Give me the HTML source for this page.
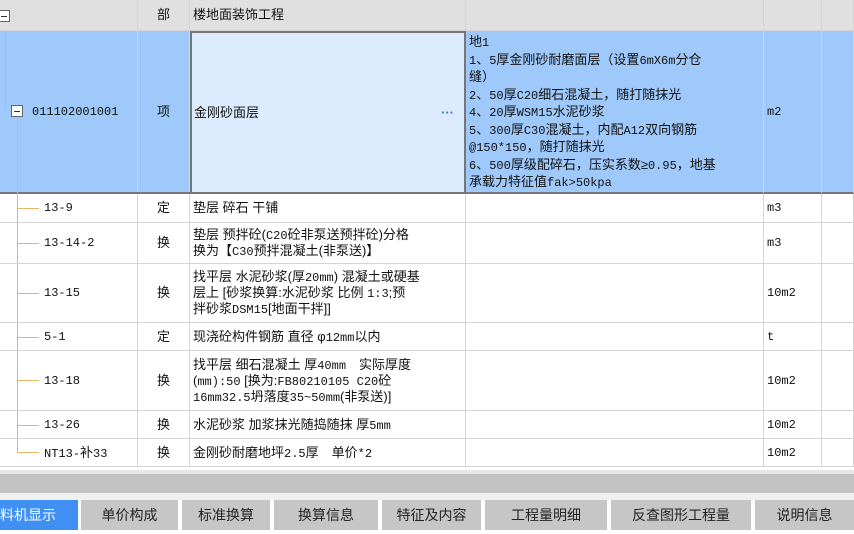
<!DOCTYPE html>
<html><head><meta charset="utf-8"><style>
*{margin:0;padding:0;box-sizing:border-box}
body{width:854px;height:534px;overflow:hidden;background:#fff;font-family:"Liberation Sans","Noto Sans CJK SC",sans-serif;font-size:13px;color:#111;position:relative}
.c{position:absolute;border-right:1px solid #d4d4d4;border-bottom:1px solid #d4d4d4;overflow:hidden;white-space:nowrap;display:flex;align-items:center;padding-left:3px;line-height:16px}
.m{display:block;padding-top:0}
.t{position:absolute;font-size:14px;color:#222;display:flex;align-items:center;justify-content:center;background:#c6c6c6;top:500px;height:30px}
.bx{position:absolute;width:12px;height:12px;border:1px solid #666;background:#fff}
.bx:after{content:"";position:absolute;left:2px;top:5px;width:6px;height:1px;background:#333}
.vl{position:absolute;background:#e2b868;width:1px}
.hl{position:absolute;background:#e2b868;height:1px}
.n{font-family:"Liberation Mono",monospace;font-size:12px;line-height:10px}
</style></head><body>
<div class="c" style="left:0;top:0;width:138px;height:31px;background:#e0e0e0"></div>
<div class="c" style="left:138px;top:0;width:52px;height:31px;background:#e0e0e0;justify-content:center;padding:0">部</div>
<div class="c" style="left:190px;top:0;width:276px;height:31px;background:#e0e0e0">楼地面装饰工程</div>
<div class="c" style="left:466px;top:0;width:298px;height:31px;background:#e0e0e0"></div>
<div class="c" style="left:764px;top:0;width:58px;height:31px;background:#e0e0e0"></div>
<div class="c" style="left:822px;top:0;width:32px;height:31px;background:#e0e0e0"></div>
<div class="bx" style="left:-2px;top:10px"></div>

<div class="c" style="left:0;top:31px;width:138px;height:163px;background:#9ec9fa;padding-left:32px"><span class="n">011102001001</span></div>
<div class="c" style="left:138px;top:31px;width:52px;height:163px;background:#9ec9fa;justify-content:center;padding:0">项</div>
<div class="c" style="left:190px;top:31px;width:276px;height:163px;background:#dcebfd;border:2px solid #777;padding-left:2px">金刚砂面层<span style="position:absolute;right:10px;color:#3a76c0;font-weight:bold">···</span></div>
<div class="c m" style="left:466px;top:31px;width:298px;height:163px;background:#9ec9fa;padding-top:2px;font-size:13px;line-height:17.5px;border-bottom:2px solid #777">地<span class="n">1</span><br><span class="n">1</span>、<span class="n">5</span>厚金刚砂耐磨面层（设置<span class="n">6mX6m</span>分仓<br>缝）<br><span class="n">2</span>、<span class="n">50</span>厚<span class="n">C20</span>细石混凝土，随打随抹光<br><span class="n">4</span>、<span class="n">20</span>厚<span class="n">WSM15</span>水泥砂浆<br><span class="n">5</span>、<span class="n">300</span>厚<span class="n">C30</span>混凝土，内配<span class="n">A12</span>双向钢筋<br><span class="n">@150*150</span>，随打随抹光<br><span class="n">6</span>、<span class="n">500</span>厚级配碎石，压实系数≥<span class="n">0.95</span>，地基<br>承载力特征值<span class="n">fak&gt;50kpa</span></div>
<div class="c" style="left:764px;top:31px;width:58px;height:163px;background:#9ec9fa;border-bottom:2px solid #777"><span class="n">m2</span></div>
<div class="c" style="left:822px;top:31px;width:32px;height:163px;background:#9ec9fa;border-bottom:2px solid #777"></div>
<div style="position:absolute;left:0;top:192px;width:466px;height:2px;background:#777"></div>
<div class="vl" style="left:5px;top:31px;height:80px"></div>
<div class="bx" style="left:11px;top:105px"></div>
<div class="vl" style="left:17px;top:118px;height:335px"></div>

<div class="c" style="left:0;top:194px;width:138px;height:29px;padding-left:44px"><span class="n">13-9</span></div>
<div class="c" style="left:138px;top:194px;width:52px;height:29px;justify-content:center;padding:0">定</div>
<div class="c" style="left:190px;top:194px;width:276px;height:29px">垫层 碎石 干铺</div>
<div class="c" style="left:466px;top:194px;width:298px;height:29px"></div>
<div class="c" style="left:764px;top:194px;width:58px;height:29px"><span class="n">m3</span></div>
<div class="c" style="left:822px;top:194px;width:32px;height:29px"></div>

<div class="c" style="left:0;top:223px;width:138px;height:41px;padding-left:44px"><span class="n">13-14-2</span></div>
<div class="c" style="left:138px;top:223px;width:52px;height:41px;justify-content:center;padding:0">换</div>
<div class="c" style="left:190px;top:223px;width:276px;height:41px"><div>垫层 预拌砼(<span class="n">C20</span>砼非泵送预拌砼)分格<br>换为【<span class="n">C30</span>预拌混凝土(非泵送)】</div></div>
<div class="c" style="left:466px;top:223px;width:298px;height:41px"></div>
<div class="c" style="left:764px;top:223px;width:58px;height:41px"><span class="n">m3</span></div>
<div class="c" style="left:822px;top:223px;width:32px;height:41px"></div>

<div class="c" style="left:0;top:264px;width:138px;height:59px;padding-left:44px"><span class="n">13-15</span></div>
<div class="c" style="left:138px;top:264px;width:52px;height:59px;justify-content:center;padding:0">换</div>
<div class="c" style="left:190px;top:264px;width:276px;height:59px"><div>找平层 水泥砂浆(厚<span class="n">20mm</span>) 混凝土或硬基<br>层上 [砂浆换算:水泥砂浆 比例 <span class="n">1:3</span>;预<br>拌砂浆<span class="n">DSM15</span>[地面干拌]]</div></div>
<div class="c" style="left:466px;top:264px;width:298px;height:59px"></div>
<div class="c" style="left:764px;top:264px;width:58px;height:59px"><span class="n">10m2</span></div>
<div class="c" style="left:822px;top:264px;width:32px;height:59px"></div>

<div class="c" style="left:0;top:323px;width:138px;height:28px;padding-left:44px"><span class="n">5-1</span></div>
<div class="c" style="left:138px;top:323px;width:52px;height:28px;justify-content:center;padding:0">定</div>
<div class="c" style="left:190px;top:323px;width:276px;height:28px"><span>现浇砼构件钢筋 直径 φ<span class="n">12mm</span>以内</span></div>
<div class="c" style="left:466px;top:323px;width:298px;height:28px"></div>
<div class="c" style="left:764px;top:323px;width:58px;height:28px"><span class="n">t</span></div>
<div class="c" style="left:822px;top:323px;width:32px;height:28px"></div>

<div class="c" style="left:0;top:351px;width:138px;height:60px;padding-left:44px"><span class="n">13-18</span></div>
<div class="c" style="left:138px;top:351px;width:52px;height:60px;justify-content:center;padding:0">换</div>
<div class="c" style="left:190px;top:351px;width:276px;height:60px"><div>找平层 细石混凝土 厚<span class="n">40mm</span>　实际厚度<br>(<span class="n">mm):50</span> [换为:<span class="n">FB80210105 C20</span>砼<br><span class="n">16mm32.5</span>坍落度<span class="n">35~50mm</span>(非泵送)]</div></div>
<div class="c" style="left:466px;top:351px;width:298px;height:60px"></div>
<div class="c" style="left:764px;top:351px;width:58px;height:60px"><span class="n">10m2</span></div>
<div class="c" style="left:822px;top:351px;width:32px;height:60px"></div>

<div class="c" style="left:0;top:411px;width:138px;height:28px;padding-left:44px"><span class="n">13-26</span></div>
<div class="c" style="left:138px;top:411px;width:52px;height:28px;justify-content:center;padding:0">换</div>
<div class="c" style="left:190px;top:411px;width:276px;height:28px"><span>水泥砂浆 加浆抹光随捣随抹 厚<span class="n">5mm</span></span></div>
<div class="c" style="left:466px;top:411px;width:298px;height:28px"></div>
<div class="c" style="left:764px;top:411px;width:58px;height:28px"><span class="n">10m2</span></div>
<div class="c" style="left:822px;top:411px;width:32px;height:28px"></div>

<div class="c" style="left:0;top:439px;width:138px;height:28px;padding-left:44px"><span><span class="n">NT13-</span>补<span class="n">33</span></span></div>
<div class="c" style="left:138px;top:439px;width:52px;height:28px;justify-content:center;padding:0">换</div>
<div class="c" style="left:190px;top:439px;width:276px;height:28px"><span>金刚砂耐磨地坪<span class="n">2.5</span>厚　单价<span class="n">*2</span></span></div>
<div class="c" style="left:466px;top:439px;width:298px;height:28px"></div>
<div class="c" style="left:764px;top:439px;width:58px;height:28px"><span class="n">10m2</span></div>
<div class="c" style="left:822px;top:439px;width:32px;height:28px"></div>

<div class="hl" style="left:17px;top:208px;width:22px"></div>
<div class="hl" style="left:17px;top:243px;width:22px"></div>
<div class="hl" style="left:17px;top:293px;width:22px"></div>
<div class="hl" style="left:17px;top:337px;width:22px"></div>
<div class="hl" style="left:17px;top:380px;width:22px"></div>
<div class="hl" style="left:17px;top:425px;width:22px"></div>
<div class="hl" style="left:17px;top:452px;width:22px"></div>

<div style="position:absolute;left:0;top:470px;width:854px;height:4px;background:#e6e6e6"></div>
<div style="position:absolute;left:0;top:474px;width:854px;height:19px;background:#c3c3c3"></div>
<div style="position:absolute;left:0;top:493px;width:854px;height:7px;background:#f0f0f0"></div>
<div class="t" style="left:0;width:78px;background:#3f90f2;color:#fff;justify-content:flex-start"><span style="margin-left:-14px">材料机显示</span></div>
<div class="t" style="left:81px;width:97px">单价构成</div>
<div class="t" style="left:182px;width:88px">标准换算</div>
<div class="t" style="left:274px;width:104px">换算信息</div>
<div class="t" style="left:382px;width:99px">特征及内容</div>
<div class="t" style="left:485px;width:122px">工程量明细</div>
<div class="t" style="left:611px;width:140px">反查图形工程量</div>
<div class="t" style="left:755px;width:99px">说明信息</div>
</body></html>
